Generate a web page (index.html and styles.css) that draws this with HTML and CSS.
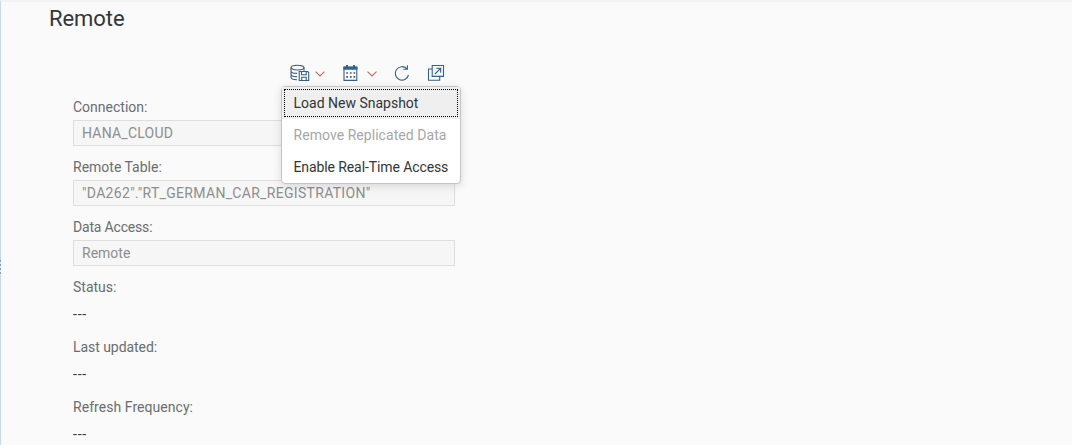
FILE: index.html
```html
<!DOCTYPE html>
<html lang="en">
<head>
<meta charset="utf-8">
<title>Remote</title>
<link rel="stylesheet" href="styles.css">
</head>
<body>
<main class="panel">
  <div class="grip"></div>
  <h1 class="title">Remote</h1>
  <section class="content">
    <div class="toolbar">
      <button class="tool split" aria-label="Snapshot">
        <svg width="20" height="18" viewBox="0 0 20 18"><ellipse cx="7.5" cy="3.6" rx="6.5" ry="2.4"/><path d="M1 3.6v9.7c0 1.5 2.7 2.5 6 2.5M1 7c0 1.5 2.9 2.4 6 2.4M1 10.2c0 1.5 2.7 2.4 6 2.4M14 3.6v3.2"/><path d="M9.2 7.5h8.5l1 1v8H9.2zM11.5 7.5v3.2h4.7V7.5M11.7 16.5v-3.2h4.5v3.2"/></svg>
        <svg class="chevron" width="10" height="6" viewBox="0 0 10 6"><path d="M.5.6 5 5 9.5.6"/></svg>
      </button>
      <button class="tool split" aria-label="Schedule">
        <svg width="16" height="18" viewBox="0 0 16 18"><path d="M2 3.2h12.8v13.2H2z"/><path class="solid" d="M1.4 2.5h14v3.2h-14zM4 1h2v2H4zM11 1h2v2h-2z"/><path class="dots" d="M4.3 9h9M4.3 12.9h9"/></svg>
        <svg class="chevron" width="10" height="6" viewBox="0 0 10 6"><path d="M.5.6 5 5 9.5.6"/></svg>
      </button>
      <button class="tool refresh" aria-label="Refresh">
        <svg width="16" height="18" viewBox="0 0 16 18"><path d="M12.8 4.7A6.7 6.7 0 1 0 14.5 11M13.4 1.2v4h-4"/></svg>
      </button>
      <button class="tool open" aria-label="Open">
        <svg width="18" height="18" viewBox="0 0 18 18"><path d="M5.2 1.5h11.3v10.9H5.2zM5.2 5H1.5v11.2h11.2v-3.8M8 10l5.6-5.7M9.2 4.2h4.5v4.5"/></svg>
      </button>
      <div class="menu">
        <div class="item focused"><span>Load New Snapshot</span></div>
        <div class="item disabled"><span class="remove">Remove Replicated Data</span></div>
        <div class="item"><span class="enable">Enable Real-Time Access</span></div>
      </div>
    </div>
    <div class="field"><div class="label">Connection:</div><div class="input"><span class="host">HANA_CLOUD</span></div></div>
    <div class="field"><div class="label">Remote Table:</div><div class="input"><span class="table">"DA262"."RT_GERMAN_CAR_REGISTRATION"</span></div></div>
    <div class="field"><div class="label access">Data Access:</div><div class="input"><span>Remote</span></div></div>
    <div class="field"><div class="label">Status:</div><div class="value">---</div></div>
    <div class="field"><div class="label updated">Last updated:</div><div class="value">---</div></div>
    <div class="field"><div class="label frequency">Refresh Frequency:</div><div class="value">---</div></div>
  </section>
</main>
</body>
</html>
```
FILE: styles.css
```css
* { box-sizing: border-box; }
body { margin: 0; height: 445px; overflow: hidden; background: #fafafa; font: 14px/20px Roboto, "Noto Sans", sans-serif; color: #32363a; }
.panel { position: relative; height: 445px; border-left: 1px solid #c5d8ea; border-top: 2px solid #f2f2f2; }
.grip { position: absolute; left: -1px; top: 258px; width: 1px; height: 15px; background: repeating-linear-gradient(#7d9fbf 0 2px, #dfeaf4 2px 4px); }
.title { margin: 0 0 0 48px; padding-top: 5px; font-size: 22px; line-height: 24px; font-weight: 400; letter-spacing: -.05px; }
.content { width: 382px; margin: 33px 0 0 72px; }
.toolbar { position: relative; display: flex; height: 18px; padding-left: 217px; margin-bottom: 15px; }
.tool { display: flex; border: 0; padding: 0; background: none; }
.tool svg { fill: none; stroke: #346187; stroke-width: 1.1; }
.tool .solid { fill: #346187; stroke: none; }
.tool .dots { stroke-width: 1.7; stroke-dasharray: 1.7 1.9; }
.split { gap: 5px; margin-right: 17px; }
.split + .split { gap: 9px; }
.chevron { margin-top: 7px; }
.tool .chevron { stroke: #c66b58; }
.open { margin-left: 17px; }
.menu { position: absolute; z-index: 1; left: 208px; top: 22px; width: 180px; height: 98px; background: #fff; border: 1px solid #c4c4c4; border-radius: 4px; box-shadow: 0 2px 8px rgba(0,0,0,.13); }
.item { height: 32px; padding: 6px 11.5px; white-space: nowrap; }
.focused { position: relative; background: #efefef; }
.focused::after { content: ""; position: absolute; inset: 2px 2px 2px; border: 1px dotted #000; }
.disabled { color: #a5a7a8; }
.remove { letter-spacing: .05px; }
.enable { letter-spacing: -.1px; }
.field { height: 60px; white-space: nowrap; }
.label { height: 23px; line-height: 20px; color: #6a6d70; }
.label.access { letter-spacing: -.18px; }
.label.updated { letter-spacing: -.05px; }
.label.frequency { letter-spacing: .05px; }
.input { height: 26px; padding: 2px 8px; border: 1px solid #dedede; background: #f6f6f6; color: #8c8e90; }
.host { letter-spacing: .22px; }
.table { letter-spacing: .31px; }
.value { padding-top: 4px; line-height: 20px; letter-spacing: .8px; }
```
